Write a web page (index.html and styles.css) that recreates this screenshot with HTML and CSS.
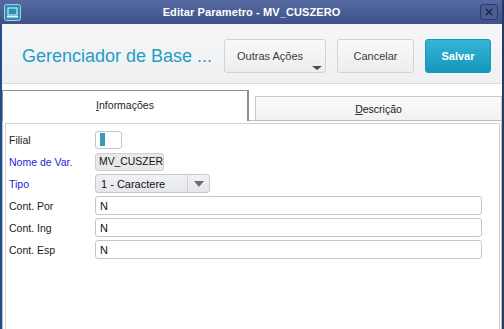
FILE: index.html
```html
<!DOCTYPE html>
<html lang="pt-BR">
<head>
    <meta charset="UTF-8">
    <meta name="viewport" content="width=device-width, initial-scale=1.0">
    <title>Editar Parametro - MV_CUSZERO</title>
    <link rel="stylesheet" href="styles.css">
</head>
<body>
    <div class="window">
        <div class="titlebar">
            <div class="app-icon">
                <svg width="17" height="17" viewBox="0 0 17 17">
                    <rect x="0.5" y="0.5" width="16" height="16" rx="2" fill="#2b92b4" stroke="#9fd3e2"/>
                    <rect x="4" y="4" width="9" height="7" fill="none" stroke="#e8f6fa" stroke-width="1"/>
                    <rect x="3" y="12" width="11" height="1.5" fill="#e8f6fa"/>
                </svg>
            </div>
            <div class="title">Editar Parametro - MV_CUSZERO</div>
            <button class="close" type="button">&times;</button>
        </div>

        <div class="main">
            <div class="header">
                <h1>Gerenciador de Base ...</h1>
                <div class="actions">
                    <button type="button" class="btn btn-more">Outras Ações<span class="caret"></span></button>
                    <button type="button" class="btn btn-cancel">Cancelar</button>
                    <button type="button" class="btn btn-save">Salvar</button>
                </div>
            </div>

            <div class="content">
                <div class="tabs">
                    <div class="tab active"><u>I</u>nformações</div>
                    <div class="tab"><u>D</u>escrição</div>
                </div>
                <div class="panel">
                    <div class="panel-inner">
                        <form class="fields">
                            <label>Filial</label>
                            <div class="field field-filial"><span class="cursor"></span></div>

                            <label class="req">Nome de Var.</label>
                            <div class="field field-name">MV_CUSZER</div>

                            <label class="req">Tipo</label>
                            <div class="field field-select">
                                <span class="select-text">1 - Caractere</span>
                                <span class="select-btn"><span class="select-arrow"></span></span>
                            </div>

                            <label>Cont. Por</label>
                            <div class="field field-wide">N</div>

                            <label>Cont. Ing</label>
                            <div class="field field-wide">N</div>

                            <label>Cont. Esp</label>
                            <div class="field field-wide">N</div>
                        </form>
                    </div>
                </div>
            </div>
        </div>
    </div>
</body>
</html>
```

FILE: styles.css
```css
* {
    box-sizing: border-box;
}
body {
    margin: 0;
    font-family: "Liberation Sans", Arial, sans-serif;
    background-color: #ffffff;
}
.window {
    width: 504px;
    height: 329px;
    display: flex;
    flex-direction: column;
    overflow: hidden;
}
.titlebar {
    height: 24px;
    display: grid;
    grid-template-columns: 1fr auto 1fr;
    align-items: center;
    padding: 0 3px 0 4px;
    background: linear-gradient(#556aa2, #3e5289);
    border-right: 2px solid #26386a;
}
.app-icon {
    display: flex;
    align-items: center;
}
.title {
    color: #ffffff;
    font-size: 11px;
    font-weight: bold;
    letter-spacing: 0.1px;
}
.close {
    justify-self: end;
    width: 18px;
    height: 16px;
    padding: 0;
    margin-right: 1px;
    border: 1px solid #2b3a66;
    border-radius: 3px;
    background: #4a5d94;
    color: #1c2544;
    font-size: 12px;
    font-weight: bold;
    line-height: 13px;
    font-family: "DejaVu Sans", sans-serif;
}
.main {
    flex: 1;
    display: flex;
    flex-direction: column;
    border-left: 2px solid #1e4f8b;
    border-right: 2px solid #2a3b5e;
}
.header {
    height: 60px;
    display: flex;
    align-items: flex-start;
    padding: 15px 11px 0 20px;
    background: linear-gradient(#f5f6f7, #eef0f2);
    border-bottom: 1px solid #dcdcdc;
}
.header h1 {
    flex: 1;
    margin: 0;
    height: 34px;
    line-height: 34px;
    font-size: 18px;
    font-weight: normal;
    color: #1f9dc6;
}
.actions {
    display: flex;
    gap: 11px;
}
.btn {
    position: relative;
    height: 34px;
    border: 1px solid #d3d3d3;
    border-radius: 3px;
    background: linear-gradient(#f9f9f9, #ededed);
    color: #3c3c3c;
    font-family: "Liberation Sans", Arial, sans-serif;
    font-size: 11px;
    padding: 0;
}
.btn-more {
    width: 102px;
    text-align: left;
    padding-left: 12px;
}
.caret {
    position: absolute;
    right: 3px;
    top: 26px;
    width: 0;
    height: 0;
    border-left: 5px solid transparent;
    border-right: 5px solid transparent;
    border-top: 4px solid #4a4a4a;
}
.btn-cancel {
    width: 77px;
}
.btn-save {
    width: 66px;
    border-color: #1c95b9;
    background: linear-gradient(#36b4d4, #1398bd);
    color: #ffffff;
    font-weight: bold;
}
.content {
    flex: 1;
    display: flex;
    flex-direction: column;
    padding-top: 6px;
}
.tabs {
    display: flex;
    align-items: flex-end;
    gap: 6px;
    height: 30px;
    font-size: 10.5px;
    color: #222222;
}
.tab {
    height: 24px;
    flex: 1;
    display: flex;
    align-items: center;
    justify-content: center;
    border: 1px solid #cacaca;
    border-bottom: none;
    background: linear-gradient(#fbfbfb, #f1f1f1);
}
.tab.active {
    flex: none;
    width: 247px;
    height: 31px;
    margin-bottom: -1px;
    position: relative;
    z-index: 1;
    background: #ffffff;
    border: 1px solid #8e8e8e;
    border-right-width: 2px;
    border-bottom: none;
    padding-bottom: 2px;
}
.tab u {
    text-decoration-color: #333333;
}
.panel {
    flex: 1;
    border: 1px solid #bdbdbd;
    border-bottom: none;
    padding: 2px 1px 0 2px;
}
.panel-inner {
    height: 100%;
    border: 1px solid #d2d2d2;
    border-bottom: none;
    padding: 6px 0 0 3px;
}
.fields {
    display: grid;
    grid-template-columns: 86px auto;
    grid-auto-rows: 19px;
    row-gap: 3px;
    align-items: center;
    justify-items: start;
    margin: 0;
}
.fields label {
    font-size: 10.5px;
    color: #1a1a1a;
}
.fields label.req {
    color: #1d1dd2;
}
.field {
    height: 19px;
    display: flex;
    align-items: center;
    padding-left: 4px;
    border: 1px solid #c6c6c6;
    border-radius: 3px;
    background: #ffffff;
    font-size: 11px;
    color: #111111;
}
.field-filial {
    width: 27px;
    height: 18px;
}
.cursor {
    width: 5px;
    height: 13px;
    background: #3a9cb3;
}
.field-name {
    width: 69px;
    height: 18px;
    padding-left: 3px;
    background: #e9e9e9;
    border-color: #cfcfcf;
    font-size: 10.4px;
    white-space: nowrap;
}
.field-select {
    width: 115px;
    padding: 0;
    background: linear-gradient(#eff1f4, #e5e7eb);
    border-color: #c8c8c8;
}
.select-text {
    flex: 1;
    padding-left: 5px;
}
.select-btn {
    width: 22px;
    height: 100%;
    display: flex;
    align-items: center;
    justify-content: center;
    border-left: 1px solid #cfd1d5;
}
.select-arrow {
    width: 0;
    height: 0;
    border-left: 5px solid transparent;
    border-right: 5px solid transparent;
    border-top: 6px solid #6e6e6e;
}
.field-wide {
    width: 387px;
}
```
